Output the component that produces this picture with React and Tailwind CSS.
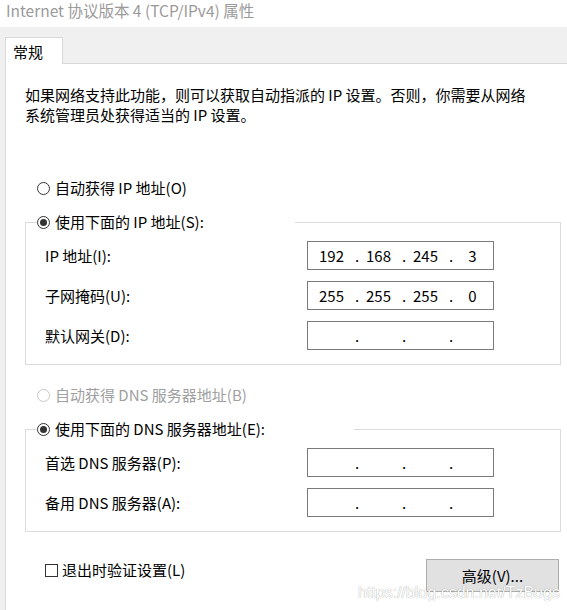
import React from 'react';

const Radio = ({ checked, disabled }) => (
  <span
    className={`inline-flex h-[13px] w-[13px] shrink-0 items-center justify-center rounded-full border bg-white ${
      disabled ? 'border-[#c8c8c8]' : 'border-[#333333]'
    }`}
  >
    {checked && <span className="h-[7px] w-[7px] rounded-full bg-[#333333]" />}
  </span>
);

const IpBox = ({ parts }) => (
  <div className="flex h-[29px] w-[187px] shrink-0 items-center border border-[#7a7a7a] bg-white">
    {parts.map((p, i) => (
      <React.Fragment key={i}>
        <span className="w-[47px] shrink-0 text-center">{p}</span>
        {i < 3 && <span className="w-0 overflow-visible whitespace-nowrap">.</span>}
      </React.Fragment>
    ))}
  </div>
);

const Row = ({ label, parts }) => (
  <div className="flex items-center">
    <span className="flex-1">{label}</span>
    <IpBox parts={parts} />
  </div>
);

const Group = ({ legend, legendWidth, children }) => (
  <fieldset className="ml-[19px] w-[536px] border border-[#dcdcdc]">
    <legend className={`ml-[11px] ${legendWidth}`}>
      <div className="flex h-[20px] items-center">
        <Radio checked />
        <span className="ml-[5px]">{legend}</span>
      </div>
    </legend>
    <div className="flex flex-col gap-[11px] pl-[19px] pr-[66px] pt-[9px] pb-[14px]">{children}</div>
  </fieldset>
);

const App = () => {
  const empty = ['', '', '', ''];

  return (
    <div className="relative h-[610px] w-[567px] overflow-hidden bg-[#f0f0f0] font-['Noto_Sans_CJK_SC',sans-serif] text-[15px] leading-[20px] text-black">
      {/* title bar */}
      <div className="h-[27px] bg-white pl-[6px] text-[15.5px] text-[#9a9a9a]">Internet 协议版本 4 (TCP/IPv4) 属性</div>

      {/* tabs */}
      <div className="mt-[10px] flex pl-[5px]">
        <div className="relative z-10 -mb-px h-[27px] w-[58px] border border-b-0 border-[#d9d9d9] bg-white pl-[7px] pt-[4px]">
          常规
        </div>
      </div>

      {/* panel */}
      <div className="ml-[5px] h-[600px] w-[600px] border-l border-t border-[#d9d9d9] bg-white pt-[21px]">
        <p className="pl-[19px]">
          如果网络支持此功能，则可以获取自动指派的 IP 设置。否则，你需要从网络
          <br />
          系统管理员处获得适当的 IP 设置。
        </p>

        <div className="mt-[53px] flex h-[20px] items-center pl-[31px]">
          <Radio />
          <span className="ml-[5px]">自动获得 IP 地址(O)</span>
        </div>

        <div className="mt-[14px]">
          <Group legend="使用下面的 IP 地址(S):" legendWidth="w-[258px]">
            <Row label="IP 地址(I):" parts={['192', '168', '245', '3']} />
            <Row label="子网掩码(U):" parts={['255', '255', '255', '0']} />
            <Row label="默认网关(D):" parts={empty} />
          </Group>
        </div>

        <div className="mt-[20px] flex h-[20px] items-center pl-[31px] text-[#a0a0a0]">
          <Radio disabled />
          <span className="ml-[5px]">自动获得 DNS 服务器地址(B)</span>
        </div>

        <div className="mt-[14px]">
          <Group legend="使用下面的 DNS 服务器地址(E):" legendWidth="w-[317px]">
            <Row label="首选 DNS 服务器(P):" parts={empty} />
            <Row label="备用 DNS 服务器(A):" parts={empty} />
          </Group>
        </div>

        <div className="mt-[27px] flex w-[553px] items-start justify-between pl-[39px]">
          <div className="mt-[1px] flex h-[20px] items-center">
            <span className="h-[13px] w-[13px] border border-[#333333] bg-white" />
            <span className="ml-[4px]">退出时验证设置(L)</span>
          </div>
          <button className="h-[33px] w-[133px] border border-[#adadad] bg-[#e1e1e1] text-[15px]">高级(V)...</button>
        </div>
      </div>

      {/* watermark */}
      <div className="absolute left-[358px] top-[583px] font-['Liberation_Sans',sans-serif] text-[16px] text-white [text-shadow:0_0_1px_rgba(0,0,0,0.45)]">
        https://blog.csdn.net/TzBugs
      </div>
    </div>
  );
};

export default App;
